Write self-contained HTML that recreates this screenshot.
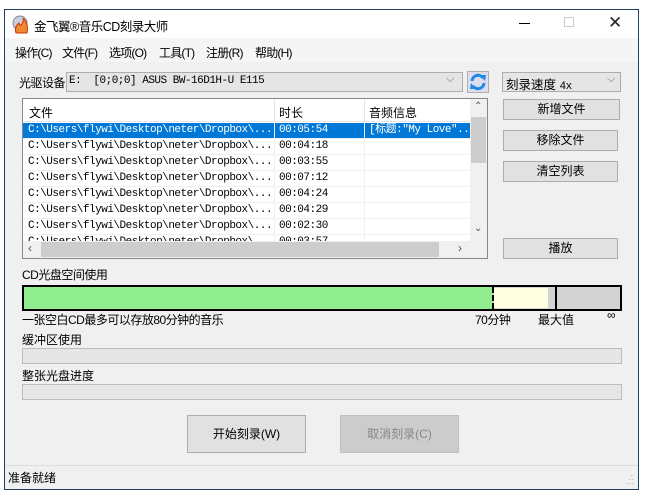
<!DOCTYPE html>
<html><head><meta charset="utf-8"><style>
*{margin:0;padding:0;box-sizing:border-box}
body{width:650px;height:495px;background:#fff;position:relative;overflow:hidden;font-family:"Liberation Sans","Noto Sans CJK SC",sans-serif;font-size:12px;color:#000}
.a{position:absolute}
.win{left:4px;top:9px;width:635px;height:481px;border:1px solid #1e3f5f;background:#f0f0f0}
.mono{font-family:"Liberation Mono","Noto Sans CJK SC",monospace;font-size:11px;letter-spacing:-0.5px}
.btn{background:#e1e1e1;border:1px solid #adadad;text-align:center;font-size:12px}
.row{left:0;width:447px;height:16px;border-bottom:1px solid #f0f0f0;line-height:15px;white-space:nowrap}
.row span{position:absolute;top:0}
.bar{background:#e6e6e6;border:1px solid #bcbcbc;left:22px;width:600px;height:16px}
.m{top:44px;font-size:12px;letter-spacing:-0.8px}
</style></head><body>
<div class="a win"></div>
<div class="a" style="left:5px;top:10px;width:633px;height:28px;background:#fff"></div>
<svg class="a" style="left:12px;top:15px" width="20" height="20" viewBox="0 0 20 20"><circle cx="8" cy="8" r="7" fill="#ccd" stroke="#889"/><path d="M4 18 Q2 12 7 8 Q8 12 10 9 Q12 5 11 3 Q17 9 15 18Z" fill="#e83" stroke="#c30"/></svg>
<div class="a" style="left:34px;top:16px;font-size:12.5px;letter-spacing:-0.5px">金飞翼®音乐CD刻录大师</div>
<div class="a" style="left:519px;top:23px;width:11px;height:1px;background:#000"></div>
<div class="a" style="left:564px;top:17px;width:10px;height:10px;border:1px solid #ccc"></div>
<div class="a" style="left:608px;top:13px;font-size:17px;color:#222">✕</div>
<div class="a" style="left:5px;top:38px;width:633px;height:24px;background:#f5f5f5"></div>
<div class="a m" style="left:15px">操作(C)</div>
<div class="a m" style="left:62px">文件(F)</div>
<div class="a m" style="left:109px">选项(O)</div>
<div class="a m" style="left:159px">工具(T)</div>
<div class="a m" style="left:206px">注册(R)</div>
<div class="a m" style="left:255px">帮助(H)</div>
<div class="a" style="left:19px;top:74px;font-size:12px;letter-spacing:-0.5px">光驱设备</div>
<div class="a" style="left:66px;top:72px;width:397px;height:20px;background:#e5e5e5;border:1px solid #adadad"></div>
<div class="a mono" style="left:69px;top:75px">E:&nbsp; [0;0;0] ASUS BW-16D1H-U E115</div>
<div class="a" style="left:446px;top:73px;color:#666;font-size:11px">⌵</div>
<div class="a" style="left:467px;top:71px;width:22px;height:22px;background:#dde;border:1px solid #adadad"></div>
<svg class="a" style="left:469px;top:73px" width="18" height="18" viewBox="0 0 18 18"><path d="M3 8 A6 6 0 0 1 14 5" fill="none" stroke="#1e88e5" stroke-width="3"/><path d="M15 10 A6 6 0 0 1 4 13" fill="none" stroke="#1e88e5" stroke-width="3"/><path d="M11 2 L17 2 L16 8Z M7 16 L1 16 L2 10Z" fill="#1e88e5"/></svg>
<div class="a" style="left:502px;top:72px;width:119px;height:20px;background:#e5e5e5;border:1px solid #adadad"></div>
<div class="a" style="left:506px;top:74px;font-size:12.5px">刻录速度 <span class="mono">4x</span></div>
<div class="a" style="left:607px;top:73px;color:#666;font-size:11px">⌵</div>

<div class="a" style="left:22px;top:98px;width:466px;height:161px;border:1px solid #828790;background:#fff;overflow:hidden">
 <div class="a" style="left:0;top:0;width:447px;height:23px;border-bottom:1px solid #e5e5e5"></div>
 <div class="a" style="left:251px;top:0;width:1px;height:23px;background:#e5e5e5"></div>
 <div class="a" style="left:341px;top:0;width:1px;height:23px;background:#e5e5e5"></div>
 <div class="a" style="left:6px;top:5px">文件</div>
 <div class="a" style="left:256px;top:5px">时长</div>
 <div class="a" style="left:346px;top:5px">音频信息</div>
 <div class="a mono" style="left:0;top:24px;width:447px">
  <div class="a row" style="top:0;background:#0078d7;color:#fff"><span style="left:5px">C:\Users\flywi\Desktop\neter\Dropbox\...</span><span style="left:256px">00:05:54</span><span style="left:346px">[标题:"My Love"..</span></div>
  <div class="a row" style="top:16px"><span style="left:5px">C:\Users\flywi\Desktop\neter\Dropbox\...</span><span style="left:256px">00:04:18</span></div>
  <div class="a row" style="top:32px"><span style="left:5px">C:\Users\flywi\Desktop\neter\Dropbox\...</span><span style="left:256px">00:03:55</span></div>
  <div class="a row" style="top:48px"><span style="left:5px">C:\Users\flywi\Desktop\neter\Dropbox\...</span><span style="left:256px">00:07:12</span></div>
  <div class="a row" style="top:64px"><span style="left:5px">C:\Users\flywi\Desktop\neter\Dropbox\...</span><span style="left:256px">00:04:24</span></div>
  <div class="a row" style="top:80px"><span style="left:5px">C:\Users\flywi\Desktop\neter\Dropbox\...</span><span style="left:256px">00:04:29</span></div>
  <div class="a row" style="top:96px"><span style="left:5px">C:\Users\flywi\Desktop\neter\Dropbox\...</span><span style="left:256px">00:02:30</span></div>
  <div class="a row" style="top:112px"><span style="left:5px">C:\Users\flywi\Desktop\neter\Dropbox\...</span><span style="left:256px">00:03:57</span></div>
  <div class="a" style="left:251px;top:0;width:1px;height:120px;background:#f0f0f0"></div>
  <div class="a" style="left:341px;top:0;width:1px;height:120px;background:#f0f0f0"></div>
 </div>
 <div class="a" style="left:447px;top:0;width:17px;height:142px;background:#f0f0f0"></div>
 <div class="a" style="left:448px;top:18px;width:15px;height:46px;background:#cdcdcd"></div>
 <div class="a" style="left:451px;top:2px;font-size:10px;color:#555">⌃</div>
 <div class="a" style="left:451px;top:124px;font-size:10px;color:#555">⌄</div>
 <div class="a" style="left:0;top:142px;width:447px;height:17px;background:#f0f0f0"></div>
 <div class="a" style="left:18px;top:143px;width:398px;height:15px;background:#cdcdcd"></div>
 <div class="a" style="left:5px;top:142px;font-size:12px;color:#555">‹</div>
 <div class="a" style="left:435px;top:142px;font-size:12px;color:#555">›</div>
 <div class="a" style="left:447px;top:142px;width:17px;height:17px;background:#f0f0f0"></div>
</div>

<div class="a btn" style="left:503px;top:99px;width:117px;height:21px;line-height:19px">新增文件</div>
<div class="a btn" style="left:503px;top:130px;width:115px;height:21px;line-height:19px">移除文件</div>
<div class="a btn" style="left:503px;top:161px;width:115px;height:21px;line-height:19px">清空列表</div>
<div class="a btn" style="left:503px;top:238px;width:115px;height:21px;line-height:19px">播放</div>

<div class="a" style="left:22px;top:266px;letter-spacing:-0.5px">CD光盘空间使用</div>
<div class="a" style="left:22px;top:285px;width:600px;height:26px;border:2px solid #000;background:#d3d3d3">
 <div class="a" style="left:0;top:0;width:468px;height:22px;background:#90ee90"></div>
 <div class="a" style="left:468px;top:0;width:0;height:22px;border-left:2px dashed #000"></div>
 <div class="a" style="left:470px;top:1px;width:54px;height:20px;background:#ffffe0"></div>
 <div class="a" style="left:531px;top:0;width:2px;height:22px;background:#000"></div>
</div>
<div class="a" style="left:22px;top:311px;letter-spacing:-0.5px">一张空白CD最多可以存放80分钟的音乐</div>
<div class="a" style="left:475px;top:311px;letter-spacing:-0.5px">70分钟</div>
<div class="a" style="left:538px;top:311px">最大值</div>
<div class="a" style="left:607px;top:308px">∞</div>
<div class="a" style="left:22px;top:331px">缓冲区使用</div>
<div class="a bar" style="top:348px"></div>
<div class="a" style="left:22px;top:367px">整张光盘进度</div>
<div class="a bar" style="top:384px"></div>
<div class="a btn" style="left:187px;top:415px;width:119px;height:38px;line-height:36px">开始刻录(W)</div>
<div class="a btn" style="left:340px;top:415px;width:119px;height:38px;line-height:36px;background:#ccc;border-color:#bfbfbf;color:#888">取消刻录(C)</div>
<div class="a" style="left:5px;top:465px;width:633px;height:1px;background:#ddd"></div>
<div class="a" style="left:8px;top:469px">准备就绪</div>
<div class="a" style="left:626px;top:474px;font-size:8px;color:#999;line-height:4px">&nbsp;&nbsp;·<br>&nbsp;··<br>···</div>
</body></html>
